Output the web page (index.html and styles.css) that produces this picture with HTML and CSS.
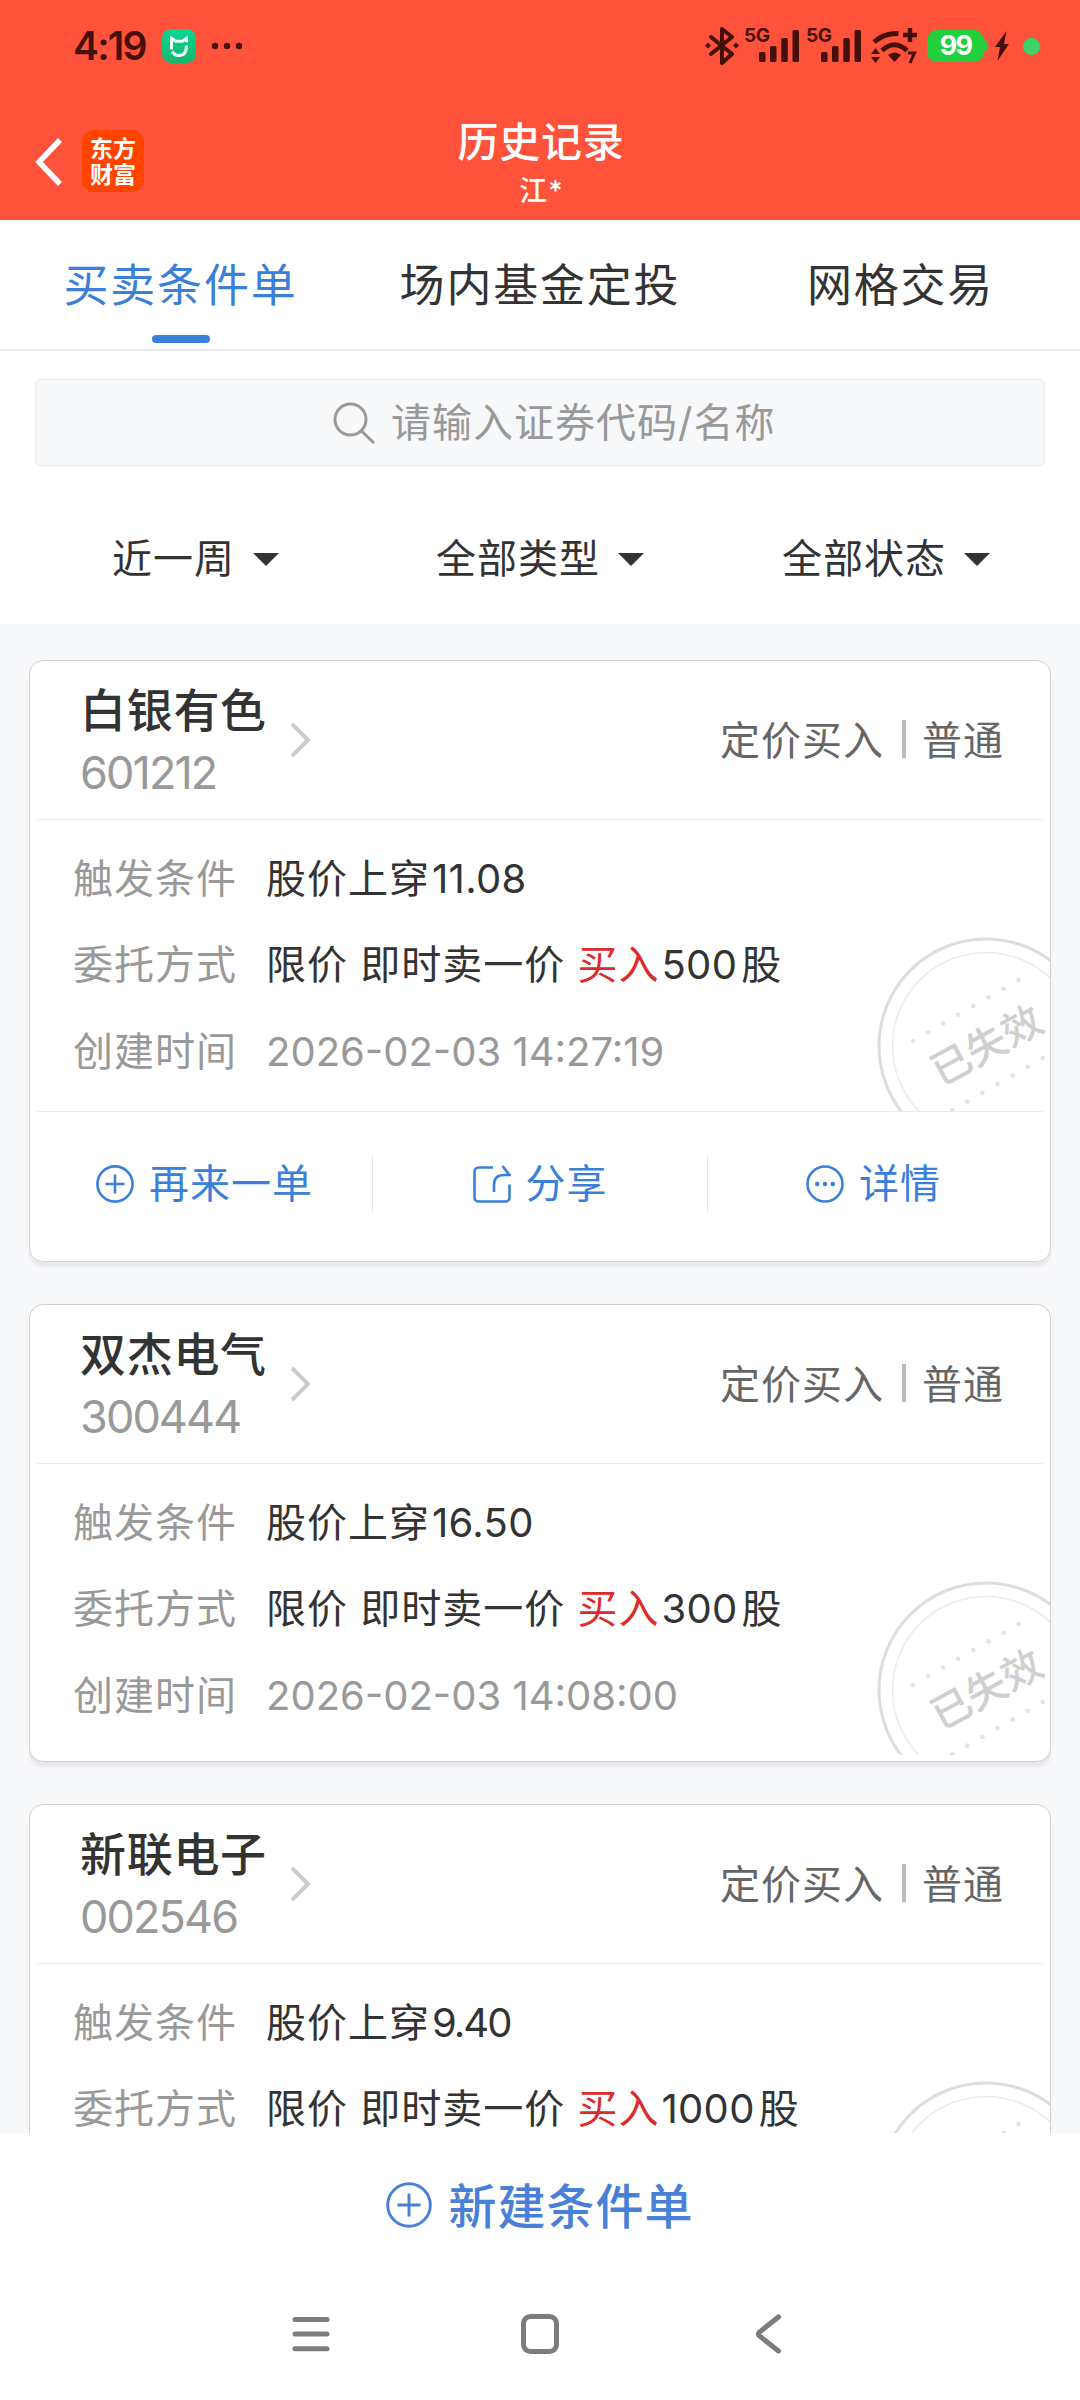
FILE: index.html
```html
<!DOCTYPE html>
<html lang="zh-CN">
<head>
<meta charset="utf-8">
<title>历史记录</title>
<link rel="stylesheet" href="styles.css">
</head>
<body>
<svg class="defs" width="0" height="0" aria-hidden="true">
  <symbol id="plus" viewBox="0 0 38 38"><circle cx="19" cy="19" r="17.6"/><path d="M19 9.5v19M9.5 19h19"/></symbol>
  <symbol id="share" viewBox="0 0 38 38"><path d="M20 2.500H5.500a4 4 0 0 0-4 4V32.500a4 4 0 0 0 4 4H32.500a4 4 0 0 0 4-4V19.500M21 27V20q0-10 10-10H36.500L29.500 1"/></symbol>
  <symbol id="more" viewBox="0 0 38 38"><circle cx="19" cy="19" r="17.500"/><path class="dots" d="M11.200 19h.01M19 19h.01M26.800 19h.01"/></symbol>
  <symbol id="chevron" viewBox="0 0 22 36"><path d="M2 2l16 16L2 34"/></symbol>
  <symbol id="signal" viewBox="0 0 42 34"><rect x="1" y="23" width="6.500" height="10" rx="1.500"/><rect x="12" y="17" width="6.500" height="16" rx="1.500"/><rect x="23.300" y="9" width="6.500" height="24" rx="1.500"/><rect x="34.500" y="1" width="6.500" height="32" rx="1.500"/></symbol>
  <symbol id="stamp" viewBox="0 0 174 174">
    <circle cx="110" cy="109" r="107" stroke="#ddd" stroke-width="3"/>
    <circle cx="110" cy="109" r="93.500" stroke="#ececec" stroke-width="1.600"/>
    <path d="M37 104L143 42.800" class="dotted"/>
    <path d="M166.800 121L60 182.700" class="dotted"/>
    <text x="111" y="122.500" text-anchor="middle" transform="rotate(-28.500 111 109)">已失效</text>
  </symbol>
</svg>

<header class="top">
  <div class="status">
    <span class="clock">4:19</span>
    <svg class="mi" viewBox="0 0 34 34"><defs><linearGradient id="g" x2="0" y2="1"><stop stop-color="#0bd693"/><stop offset="1" stop-color="#12b86c"/></linearGradient></defs><rect width="34" height="34" rx="9" fill="url(#g)"/><path d="M9.500 20.500V9.300l4.200 3h6.600l4.200-3v4M24.500 16.500c0 7-3 10-7.500 10-3 0-5.500-1.500-6.700-4" fill="none" stroke="#effff8" stroke-width="3"/></svg>
    <svg class="ellipsis" viewBox="0 0 32 8"><circle cx="4" cy="4" r="3.200"/><circle cx="16" cy="4" r="3.200"/><circle cx="28" cy="4" r="3.200"/></svg>
    <div class="sys">
      <svg class="bt" viewBox="0 0 34 38"><path d="M6 10l21 17-10 9V2l10 8L6 27" fill="none" stroke="#43100b" stroke-width="4" stroke-linejoin="round" stroke-linecap="round"/><path d="M3 15.500l3 3-3 3-3-3zM31 15.500l3 3-3 3-3-3z"/></svg>
      <div class="cell"><span>5G</span><svg viewBox="0 0 42 34"><use href="#signal"/></svg></div>
      <div class="cell"><span>5G</span><svg viewBox="0 0 42 34"><use href="#signal"/></svg></div>
      <svg class="wifi" viewBox="0 0 46 36"><g fill="none" stroke="#43100b" stroke-width="5"><path d="M3 14Q13 5 27.500 5.500"/><path d="M11 22.500Q23.500 11 36 22.500"/><path d="M32 7h14M39 0v14" stroke-width="4.400"/><path d="M37 25h6.500l-4.500 10" stroke-width="3"/></g><path d="M17 27q6.500-5 13 0l-6.500 7zM0 26l4.500-6L9 26zM0 29h9l-4.500 6z"/></svg>
      <span class="battery">99</span>
      <svg class="bolt" viewBox="0 0 14 30"><path d="M11.500 0L0 16h5L2.500 30 14 13H9z"/></svg>
      <i class="live"></i>
    </div>
  </div>
  <div class="nav">
    <svg class="back" viewBox="0 0 28 48"><path d="M25 2L4 24l21 22"/></svg>
    <div class="logo">东方<br>财富</div>
    <div class="heading"><h1>历史记录</h1><p>江*</p></div>
  </div>
</header>

<nav class="tabs"><a class="on">买卖条件单</a><a>场内基金定投</a><a>网格交易</a></nav>

<section class="filters">
  <div class="search"><svg viewBox="0 0 42 42"><circle cx="17.500" cy="17.500" r="15.500"/><path d="M28.500 29L41 41"/></svg><span>请输入证券代码/名称</span></div>
  <div class="selects"><span>近一周</span><span>全部类型</span><span>全部状态</span></div>
</section>

<main class="list">
  <article class="card">
    <div class="head">
      <div class="stock"><h2>白银有色</h2><p>601212</p></div>
      <svg class="chev" viewBox="0 0 22 36"><use href="#chevron"/></svg>
      <div class="kind"><span>定价买入</span><i></i><span>普通</span></div>
    </div>
    <div class="body">
      <svg class="stamp" viewBox="0 0 174 174"><use href="#stamp"/></svg>
      <dl>
        <dt>触发条件</dt><dd>股价上穿<b>11.08</b></dd>
        <dt>委托方式</dt><dd>限价 即时卖一价 <em>买入</em><b>500</b>股</dd>
        <dt>创建时间</dt><dd class="time">2026-02-03 14:27:19</dd>
      </dl>
    </div>
    <div class="actions">
      <a><svg viewBox="0 0 38 38"><use href="#plus"/></svg>再来一单</a>
      <a><svg viewBox="0 0 38 38"><use href="#share"/></svg>分享</a>
      <a><svg viewBox="0 0 38 38"><use href="#more"/></svg>详情</a>
    </div>
  </article>

  <article class="card">
    <div class="head">
      <div class="stock"><h2>双杰电气</h2><p>300444</p></div>
      <svg class="chev" viewBox="0 0 22 36"><use href="#chevron"/></svg>
      <div class="kind"><span>定价买入</span><i></i><span>普通</span></div>
    </div>
    <div class="body">
      <svg class="stamp" viewBox="0 0 174 174"><use href="#stamp"/></svg>
      <dl>
        <dt>触发条件</dt><dd>股价上穿<b>16.50</b></dd>
        <dt>委托方式</dt><dd>限价 即时卖一价 <em>买入</em><b>300</b>股</dd>
        <dt>创建时间</dt><dd class="time">2026-02-03 14:08:00</dd>
      </dl>
    </div>
  </article>

  <article class="card">
    <div class="head">
      <div class="stock"><h2>新联电子</h2><p>002546</p></div>
      <svg class="chev" viewBox="0 0 22 36"><use href="#chevron"/></svg>
      <div class="kind"><span>定价买入</span><i></i><span>普通</span></div>
    </div>
    <div class="body">
      <svg class="stamp" viewBox="0 0 174 174"><use href="#stamp"/></svg>
      <dl>
        <dt>触发条件</dt><dd>股价上穿<b class="tight">9.40</b></dd>
        <dt>委托方式</dt><dd>限价 即时卖一价 <em>买入</em><b>1000</b>股</dd>
      </dl>
    </div>
  </article>
</main>

<footer class="bottom">
  <a class="create"><svg viewBox="0 0 38 38"><use href="#plus"/></svg><span>新建条件单</span></a>
  <div class="keys">
    <svg viewBox="0 0 44 44"><path d="M6 7.500h32M6 22h32M6 36.700h32"/></svg>
    <svg viewBox="0 0 44 44"><rect x="5.500" y="4.500" width="33" height="35" rx="7"/></svg>
    <svg viewBox="0 0 44 44"><path d="M31.500 5L12.500 20q-2 2 0 4L31.500 39"/></svg>
  </div>
</footer>
</body>
</html>
```
FILE: styles.css
```css
* { box-sizing: border-box; }
body {
  margin: 0;
  width: 1080px;
  height: 2400px;
  overflow: hidden;
  display: flex;
  flex-direction: column;
  background: #f7f8fa;
  color: #333;
  font-family: Inter, "Noto Sans CJK SC", sans-serif;
  font-size: 40px;
  letter-spacing: 1px;
}
h1, h2, p, dl, dd { margin: 0; }
svg { display: block; flex: none; }
b, em, i { font-weight: inherit; font-style: normal; }
.defs { position: absolute; }

/* header */
.top { height: 220px; flex: none; background: #ff523b; color: #fff; }
.status { height: 92px; display: flex; align-items: center; padding: 0 40px 0 73px; color: #43100b; }
.status svg { fill: #43100b; }
.clock { width: 89px; font-size: 39px; font-weight: 600; letter-spacing: -1.800px; line-height: 92px; }
.mi { width: 34px; height: 34px; }
.ellipsis { width: 32px; height: 8px; margin-left: 15px; }
.sys { margin-left: auto; display: flex; align-items: center; }
.bt { width: 34px; height: 38px; margin-right: 5px; }
.cell { width: 56px; height: 34px; margin-right: 6px; display: flex; justify-content: flex-end; position: relative; }
.cell svg { width: 42px; height: 34px; }
.cell span { position: absolute; left: 0; top: -3px; font-size: 19px; line-height: 20px; font-weight: 700; letter-spacing: -.5px; }
.wifi { width: 46px; height: 36px; margin: 0 10px 0 3px; }
.battery {
  width: 57px; height: 32px; margin-right: 11px; border-radius: 10px; position: relative;
  background: #22cf3c; color: #fff; font-size: 27px; line-height: 32px; font-weight: 700; letter-spacing: -1.800px; text-align: center;
}
.battery::after { content: ""; position: absolute; left: 56px; top: 10px; width: 5px; height: 12px; border-radius: 0 5px 5px 0; background: #22cf3c; }
.bolt { width: 14px; height: 30px; }
.live { width: 17px; height: 17px; margin-left: 14px; border-radius: 50%; background: #3ad46a; }

.nav { height: 128px; display: flex; align-items: flex-start; padding-left: 35px; }
.back { width: 28px; height: 48px; margin-top: 46px; fill: none; stroke: #fff; stroke-width: 5.500; }
.logo {
  width: 62px; height: 62px; margin: 38px 0 0 19px; padding-top: 4px; border-radius: 12px; background: #ff4400;
  font: 700 23px/26px "Noto Sans CJK SC", sans-serif; letter-spacing: 0; text-align: center;
}
.heading { width: 794px; padding-top: 23px; text-align: center; }
.heading h1 { font-size: 41px; line-height: 54px; font-weight: 500; letter-spacing: .8px; }
.heading p { margin-top: 6px; padding-left: 1px; font-size: 28px; line-height: 32px; font-weight: 500; }

/* tabs */
.tabs { height: 131px; flex: none; display: grid; grid-template-columns: 361px 358px 361px; border-bottom: 2px solid #eaebec; background: #fff; }
.tabs a { display: flex; flex-direction: column; align-items: center; padding-top: 1px; font-size: 45px; line-height: 129px; letter-spacing: 1.800px; }
.tabs a:last-child { padding-left: 2px; }
.tabs .on { color: #3a80da; }
.tabs .on::after { content: ""; width: 58px; height: 8px; margin-top: -15px; border-radius: 4px; background: #3a80da; }

/* search and selects */
.filters { height: 273px; flex: none; padding: 28px 35px 0; background: #fff; }
.search { height: 87px; display: flex; align-items: center; gap: 16px; padding-left: 297px; border: 1px solid #eaebed; border-radius: 6px; background: #f7f8fa; color: #999; line-height: 85px; }
.search svg { width: 42px; height: 42px; fill: none; stroke: #999; stroke-width: 3; }
.selects { display: flex; padding: 64px 0 0 77px; line-height: 58px; }
.selects span { display: flex; align-items: center; }
.selects span::after { content: ""; margin-left: 18px; border: 13px solid transparent; border-top-color: #333; border-bottom: 0; }
.selects span + span { margin-left: 157px; }
.selects span + span + span { margin-left: 138px; }

/* order cards */
.list { flex: 1; overflow: hidden; padding: 36px 29px 0; }
.card { margin-bottom: 42px; border: 1px solid #cfd0d2; border-radius: 14px; background: #fff; box-shadow: 0 4px 1px #e8e9eb, 0 6px 3px #eff0f2; }
.head { height: 159px; margin: 0 7px; display: flex; align-items: center; padding: 0 39px 0 43px; border-bottom: 1px solid #ececec; }
.stock { width: 210px; }
.stock h2 { font-size: 46px; line-height: 56px; font-weight: 500; letter-spacing: .700px; }
.stock p { font-size: 45px; line-height: 52px; letter-spacing: -1.900px; margin-top: 9px; color: #999; }
.chev { width: 22px; height: 36px; fill: none; stroke: #ccc; stroke-width: 4; }
.kind { margin: -4px 0 0 auto; display: flex; align-items: center; color: #666; }
.kind i { width: 4px; height: 38px; margin: 2px 16px 0 18px; background: #bbb; }
.body { height: 291px; position: relative; padding: 16px 0 0 43px; }
.body dl { display: grid; grid-template-columns: 193px 1fr; grid-auto-rows: 86.400px; line-height: 86px; white-space: nowrap; }
dt, .time { color: #999; }
.body .time { letter-spacing: 0; }
dd { position: relative; }
dd b { margin: 0 4px 0 2px; letter-spacing: .3px; }
dd .tight { letter-spacing: -2px; }
dd em { color: #dd2b2b; }
.stamp { position: absolute; right: 0; bottom: 0; width: 174px; height: 174px; fill: none; }
.stamp + dl { position: relative; }
.dotted { stroke: #e2e3e4; stroke-width: 4.600; stroke-linecap: round; stroke-dasharray: 0 17.430; }
#stamp text { fill: #cfcfcf; font-size: 40px; letter-spacing: 0; font-weight: 500; }
.card:not(:first-child) .body { height: 297px; }
.card:not(:first-child) .stamp { bottom: 6px; }
.actions { height: 150px; margin: 0 7px; display: grid; grid-template-columns: 335px 335px 335px; align-items: center; border-top: 1px solid #ececec; color: #3a80da; }
.actions a { height: 58px; display: flex; align-items: center; justify-content: center; gap: 15px; line-height: 58px; margin-top: -5px; }
.actions a + a { border-left: 1px solid #e6e6e6; }
.actions a:last-child { padding-right: 3px; }
.actions svg { width: 38px; height: 38px; fill: none; stroke: #3a80da; stroke-width: 2.600; }
.dots { stroke-width: 4.600; stroke-linecap: round; }

/* bottom */
.bottom { height: 267px; flex: none; background: #fff; }
.create { height: 144px; display: flex; align-items: center; justify-content: center; gap: 16px; color: #4a7fd8; font-size: 48px; font-weight: 500; letter-spacing: 1px; }
.create span { padding-bottom: 4px; }
.create svg { width: 46px; height: 46px; fill: none; stroke: #4a7fd8; stroke-width: 2.400; }
.keys { display: flex; justify-content: center; gap: 185px; padding-top: 35px; }
.keys svg { width: 44px; height: 44px; fill: none; stroke: #7c7c7c; stroke-width: 5; stroke-linecap: round; }
```
